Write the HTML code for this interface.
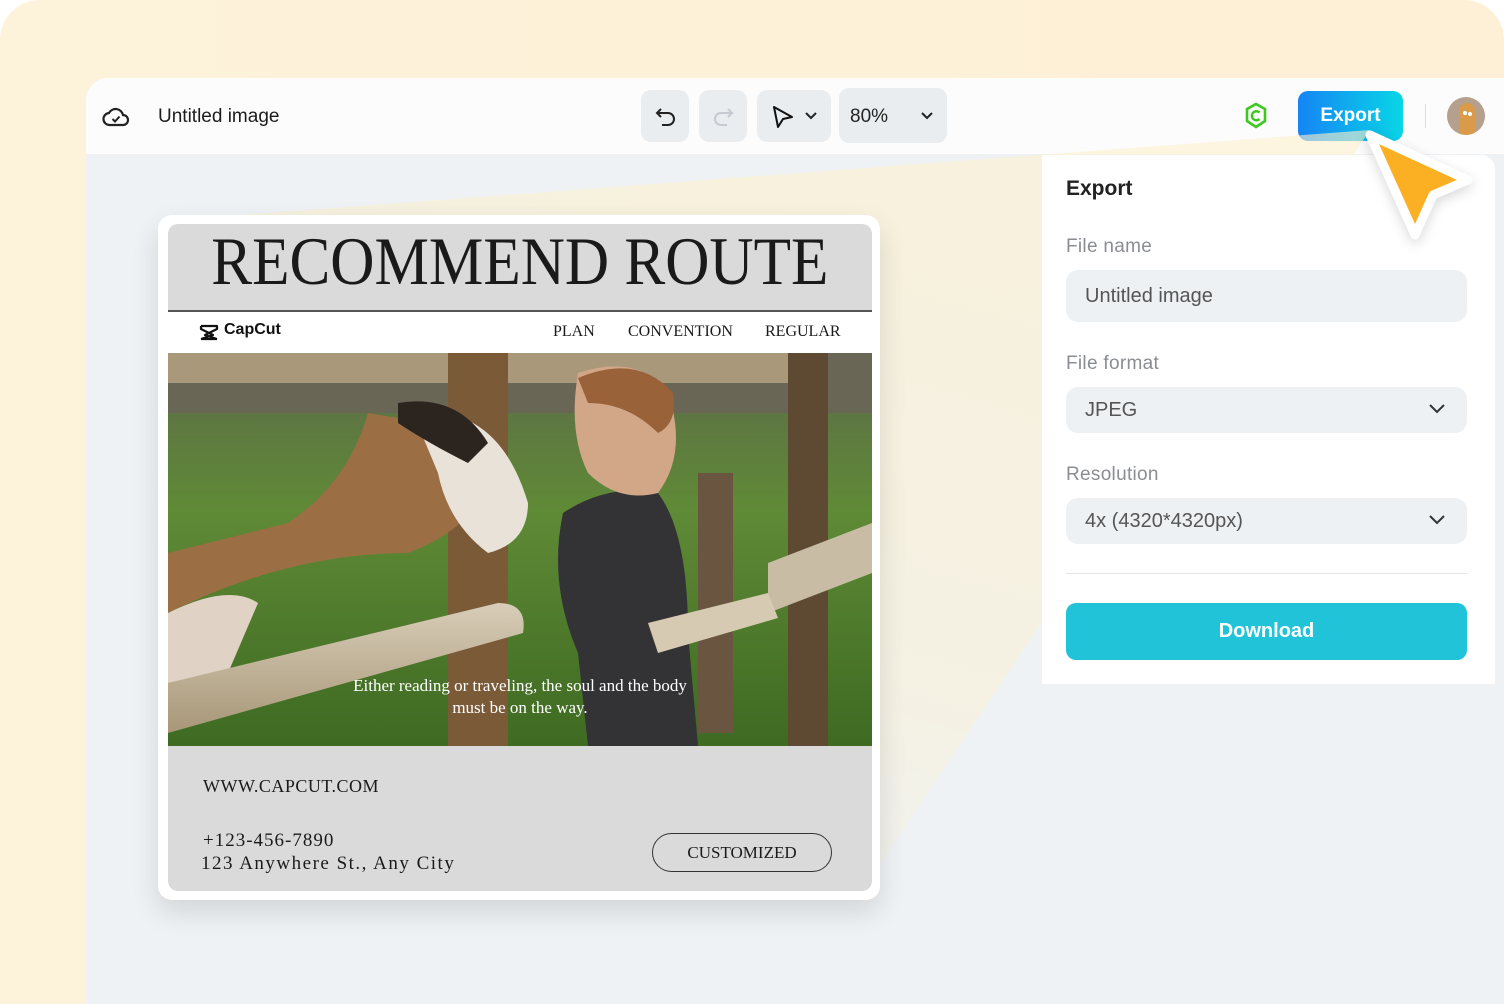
<!DOCTYPE html>
<html><head><meta charset="utf-8">
<style>
*{margin:0;padding:0;box-sizing:border-box}
body{width:1504px;height:1004px;overflow:hidden;background:#fff;font-family:"Liberation Sans",sans-serif;position:relative}
.outer{position:absolute;left:0;top:0;width:1504px;height:1004px;border-radius:40px 40px 0 0;background:linear-gradient(90deg,#fdf2da,#fdf0d6)}
.app{position:absolute;left:86px;top:78px;width:1418px;height:926px;background:#eef2f5;border-top-left-radius:22px;overflow:hidden}
.tb{position:absolute;left:0;top:0;width:100%;height:76px;background:#fcfcfd}
.abs{position:absolute}
.btn{position:absolute;top:12px;height:52px;background:#e9edf0;border-radius:10px}
.poster{position:absolute;left:158px;top:215px;width:722px;height:685px;background:#fff;border-radius:14px;box-shadow:0 12px 28px rgba(0,0,0,.12)}
.inner{position:absolute;left:10px;top:9px;width:704px;height:667px;background:#dadada;border-radius:10px;overflow:hidden}
.serif{font-family:"Liberation Serif",serif;color:#1a1a1a}
.panel{position:absolute;left:1042px;top:155px;width:453px;height:529px;background:#fff;border-radius:0 14px 0 0}
.lbl{position:absolute;left:24px;font-size:19px;color:#8a8d91;letter-spacing:.3px}
.field{position:absolute;left:24px;width:401px;background:#eef1f4;border-radius:12px;font-size:20px;color:#555;padding-left:19px;display:flex;align-items:center}
.beam{position:absolute;left:0;top:0;width:1504px;height:1004px;clip-path:polygon(1370px 130px,200px 218px,560px 900px,870px 880px);background:linear-gradient(195deg,rgba(253,240,205,.6) 25%,rgba(253,240,205,.45) 60%,rgba(253,240,205,0) 85%);pointer-events:none}
</style></head><body>
<div class="outer"></div>
<div class="app">
  <div class="tb">
    <svg class="abs" style="left:16px;top:25px" width="28" height="26" viewBox="0 0 28 26"><path d="M8 22 H21 A5 5 0 0 0 21 12 A7.5 7.5 0 0 0 7 10 A6 6 0 0 0 8 22 Z" fill="none" stroke="#222" stroke-width="2.2"/><path d="M10.5 16 l2.5 2.5 l4.5 -5" fill="none" stroke="#222" stroke-width="2"/></svg>
    <div class="abs" style="left:72px;top:28px;font-size:19px;color:#1c1c1c">Untitled image</div>
    <div class="btn" style="left:555px;width:48px"></div>
    <svg class="abs" style="left:568px;top:27px" width="24" height="24" viewBox="0 0 24 24"><path d="M7 4 L3 8 L7 12 M3 8 H14 A6 6 0 0 1 14 20 H8" fill="none" stroke="#222" stroke-width="2"/></svg>
    <div class="btn" style="left:613px;width:48px"></div>
    <svg class="abs" style="left:625px;top:27px" width="24" height="24" viewBox="0 0 24 24"><path d="M17 4 L21 8 L17 12 M21 8 H10 A6 6 0 0 0 10 20 H16" fill="none" stroke="#c5cbd1" stroke-width="2"/></svg>
    <div class="btn" style="left:671px;width:74px"></div>
    <svg class="abs" style="left:684px;top:26px" width="26" height="26" viewBox="0 0 26 26"><path d="M4 3 L22 13 L13 15 L8 23 Z" fill="none" stroke="#111" stroke-width="2" stroke-linejoin="round"/></svg>
    <svg class="abs" style="left:718px;top:32px" width="14" height="12" viewBox="0 0 14 12"><path d="M2 3 L7 8 L12 3" fill="none" stroke="#222" stroke-width="2"/></svg>
    <div class="btn" style="left:753px;width:108px;top:10px;height:55px"></div>
    <div class="abs" style="left:764px;top:28px;font-size:19px;color:#222">80%</div>
    <svg class="abs" style="left:834px;top:32px" width="14" height="12" viewBox="0 0 14 12"><path d="M2 3 L7 8 L12 3" fill="none" stroke="#222" stroke-width="2"/></svg>
    <svg class="abs" style="left:1158px;top:24px" width="24" height="28" viewBox="0 0 24 28"><path d="M12 2 L21 7 V19 L12 25 L3 19 V7 Z" fill="none" stroke="#3cc81e" stroke-width="2.6"/><path d="M15.5 10.5 A4.5 4.5 0 1 0 15.5 17" fill="none" stroke="#3cc81e" stroke-width="2.4"/></svg>
    <div class="abs" style="left:1212px;top:13px;width:105px;height:50px;border-radius:10px;background:linear-gradient(90deg,#1585f5,#08d6e6);color:#fff;font-size:19px;font-weight:bold;display:flex;align-items:center;justify-content:center">Export</div>
    <div class="abs" style="left:1339px;top:26px;width:1px;height:24px;background:#ddd"></div>
    <div class="abs" style="left:1361px;top:19px;width:38px;height:38px;border-radius:50%;background:#b5a08e;overflow:hidden"><div style="position:absolute;left:12px;top:6px;width:16px;height:34px;background:#d99a4a;border-radius:8px 8px 0 0"></div><div style="position:absolute;left:16px;top:14px;width:4px;height:4px;background:#fff;border-radius:50%"></div><div style="position:absolute;left:21px;top:15px;width:4px;height:4px;background:#fff;border-radius:50%"></div></div>
  </div>
</div>

<div class="beam"></div>

<div class="poster"><div class="inner">
  <div class="serif" style="position:absolute;left:0;top:2px;width:704px;text-align:center;line-height:70px;white-space:nowrap"><span style="display:inline-block;font-size:68px;transform:scaleX(.9);transform-origin:center">RECOMMEND ROUTE</span></div>
  <div style="position:absolute;left:0;top:86px;width:704px;height:2px;background:#555"></div>
  <div style="position:absolute;left:0;top:88px;width:704px;height:41px;background:#fff">
    <svg style="position:absolute;left:31px;top:12px" width="20" height="17" viewBox="0 0 20 17"><path d="M2 2 L18 2 L18 5 L6 11 L18 15 M2 15 L18 15 M2 2 L2 5 L14 11 L2 15" fill="none" stroke="#111" stroke-width="2.2" stroke-linejoin="round"/></svg>
    <div style="position:absolute;left:56px;top:9px;font-size:16px;font-weight:bold;color:#111">CapCut</div>
    <div class="serif" style="position:absolute;left:385px;top:11px;font-size:16px">PLAN</div>
    <div class="serif" style="position:absolute;left:460px;top:11px;font-size:16px">CONVENTION</div>
    <div class="serif" style="position:absolute;left:597px;top:11px;font-size:16px">REGULAR</div>
  </div>
  <svg style="position:absolute;left:0;top:129px" width="704" height="393" viewBox="0 0 704 393">
    <defs>
      <linearGradient id="g" x1="0" y1="0" x2="0" y2="1"><stop offset="0" stop-color="#5d6a4a"/><stop offset=".4" stop-color="#5f8a36"/><stop offset="1" stop-color="#3e6a22"/></linearGradient>
      <linearGradient id="w" x1="0" y1="0" x2="0" y2="1"><stop offset="0" stop-color="#d8cdb8"/><stop offset="1" stop-color="#a89778"/></linearGradient>
    </defs>
    <rect width="704" height="393" fill="url(#g)"/>
    <rect x="0" y="0" width="704" height="60" fill="#6a6656"/>
    <rect x="0" y="0" width="620" height="30" fill="#a9987a"/>
    <rect x="280" y="0" width="60" height="393" fill="#7b5a38"/>
    <rect x="620" y="0" width="40" height="393" fill="#5e4a32"/>
    <rect x="530" y="120" width="35" height="260" fill="#6a5640"/>
    <polygon points="600,210 704,170 704,220 600,260" fill="#c8bca4"/>
    <path d="M0 260 Q120 200 240 200 Q320 170 330 100 Q320 60 260 70 L200 60 Q180 130 120 170 Q40 190 0 200Z" fill="#9c6e44"/>
    <path d="M0 260 Q60 230 90 250 L60 320 L0 330Z" fill="#e0d2c4"/>
    <path d="M245 60 Q330 50 360 150 Q360 190 320 200 Q280 170 270 120Z" fill="#e9e2d8"/>
    <path d="M230 50 Q290 40 320 90 L300 110 Q260 90 230 70Z" fill="#2c241e"/>
    <path d="M395 160 Q440 130 490 140 Q520 180 520 280 L530 393 H420 L410 300 Q380 230 395 160Z" fill="#333335"/>
    <path d="M410 20 Q470 0 500 40 Q520 100 490 140 Q450 150 420 120 Q400 80 410 20Z" fill="#d2a787"/>
    <path d="M410 25 Q470 0 505 40 Q510 70 490 80 Q460 50 420 50Z" fill="#9a6238"/>
    <path d="M0 330 L330 250 Q360 250 355 280 L0 380Z" fill="url(#w)"/>
    <path d="M480 270 L600 240 L610 265 L490 300Z" fill="#d6cab2"/>
    <text x="352" y="338" font-family="Liberation Serif,serif" font-size="17" fill="#fff" text-anchor="middle">Either reading or traveling, the soul and the body</text>
    <text x="352" y="360" font-family="Liberation Serif,serif" font-size="17" fill="#fff" text-anchor="middle">must be on the way.</text>
  </svg>
  <div class="serif" style="position:absolute;left:35px;top:552px;font-size:18px;letter-spacing:.5px">WWW.CAPCUT.COM</div>
  <div class="serif" style="position:absolute;left:35px;top:606px;font-size:19px;letter-spacing:1px">+123-456-7890</div>
  <div class="serif" style="position:absolute;left:33px;top:629px;font-size:19px;letter-spacing:1.5px">123 Anywhere St., Any City</div>
  <div class="serif" style="position:absolute;left:484px;top:609px;width:180px;height:39px;border:1.5px solid #333;border-radius:20px;font-size:17px;display:flex;align-items:center;justify-content:center">CUSTOMIZED</div>
</div></div>

<div class="panel">
  <div class="abs" style="left:24px;top:22px;font-size:21px;font-weight:bold;color:#222">Export</div>
  <div class="lbl" style="top:81px">File name</div>
  <div class="field" style="top:115px;height:52px">Untitled image</div>
  <div class="lbl" style="top:198px">File format</div>
  <div class="field" style="top:232px;height:46px">JPEG</div>
  <svg class="abs" style="left:386px;top:246px" width="18" height="14" viewBox="0 0 18 14"><path d="M2 4 L9 11 L16 4" fill="none" stroke="#333" stroke-width="2"/></svg>
  <div class="lbl" style="top:309px">Resolution</div>
  <div class="field" style="top:343px;height:46px">4x (4320*4320px)</div>
  <svg class="abs" style="left:386px;top:357px" width="18" height="14" viewBox="0 0 18 14"><path d="M2 4 L9 11 L16 4" fill="none" stroke="#333" stroke-width="2"/></svg>
  <div class="abs" style="left:24px;top:418px;width:401px;height:1px;background:#e3e5e8"></div>
  <div class="abs" style="left:24px;top:448px;width:401px;height:57px;background:#20c3d8;border-radius:10px;color:#fff;font-size:20px;font-weight:bold;display:flex;align-items:center;justify-content:center">Download</div>
</div>

<svg class="abs" style="left:1355px;top:120px;filter:drop-shadow(0 4px 6px rgba(0,0,0,.15))" width="135" height="135" viewBox="0 0 135 135"><path d="M15 15 L113 60 L78 75 L60 115 Z" fill="#fbb024" stroke="#fff" stroke-width="9" stroke-linejoin="round"/></svg>
</body></html>
